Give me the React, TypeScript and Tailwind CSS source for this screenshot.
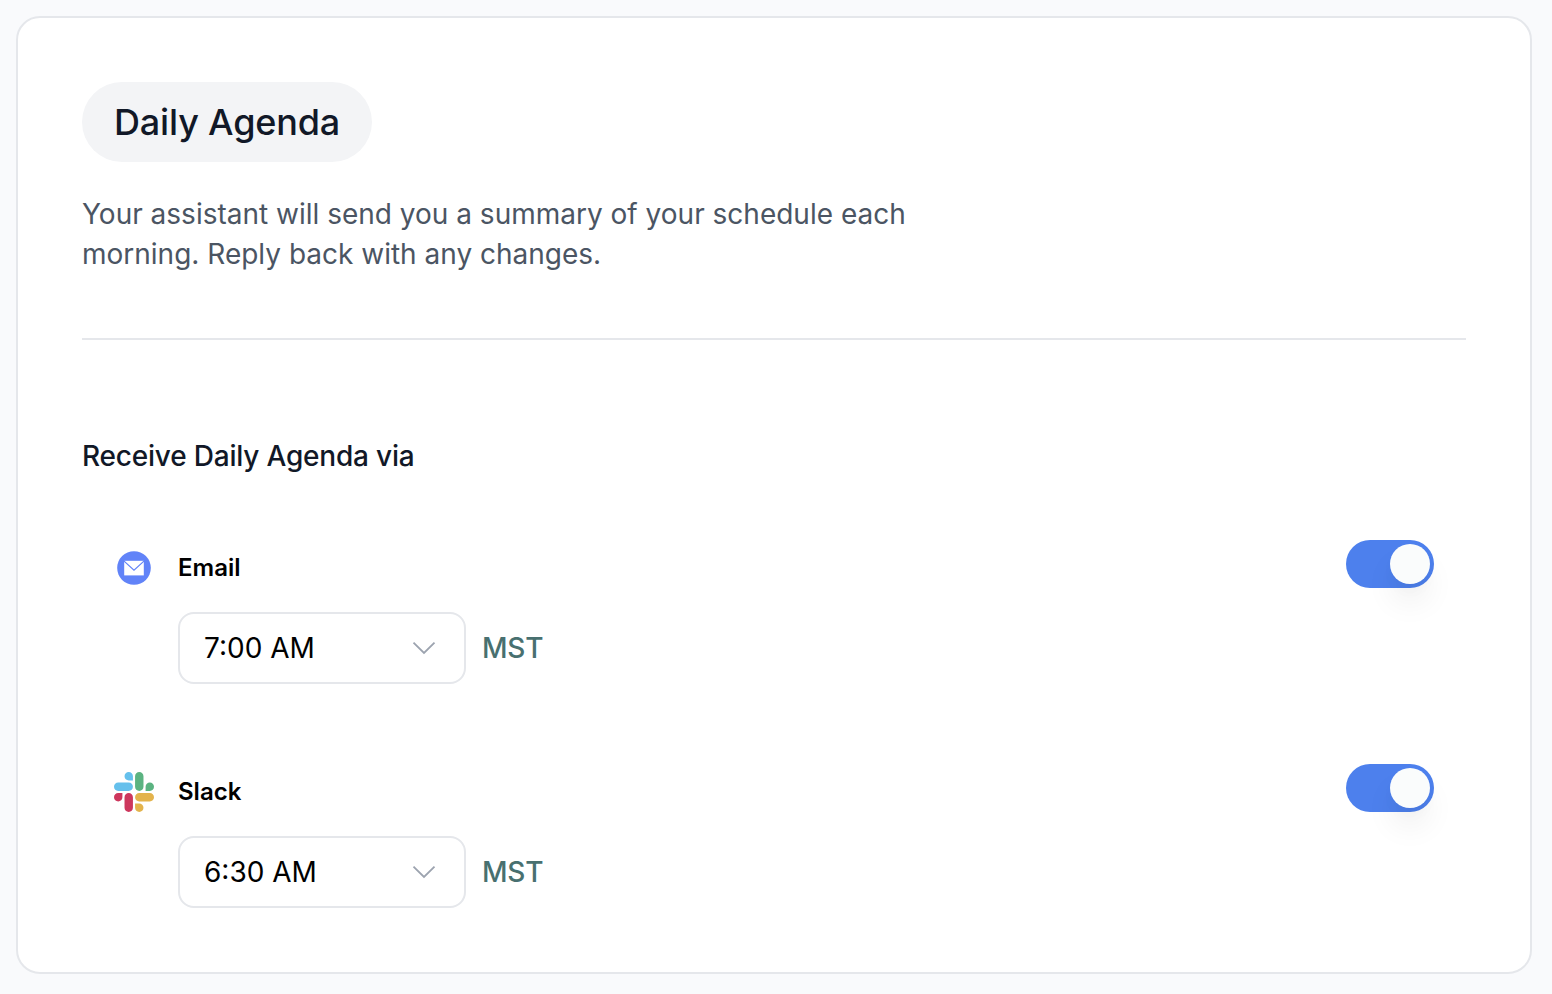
function EmailIcon() {
  return (
    <svg viewBox="0 0 40 40" className="size-10">
      <circle cx="20" cy="20" r="16.8" fill="#6183f8" />
      <path d="M10.2 12.8h19.6v14.6H10.2z" fill="#fff" />
      <path d="M9.8 12.9l10.2 9.2 10.2-9.2" fill="none" stroke="#6183f8" strokeWidth="1.2" />
    </svg>
  );
}

function SlackIcon() {
  return (
    <svg viewBox="0 0 122.8 122.8" className="size-10">
      <path d="M25.8 77.6c0 7.1-5.8 12.9-12.9 12.9S0 84.7 0 77.6s5.8-12.9 12.9-12.9h12.9v12.9zm6.5 0c0-7.1 5.8-12.9 12.9-12.9s12.9 5.8 12.9 12.9v32.3c0 7.1-5.8 12.9-12.9 12.9s-12.9-5.8-12.9-12.9V77.6z" fill="#cd375d" />
      <path d="M45.2 25.8c-7.1 0-12.9-5.8-12.9-12.9S38.1 0 45.2 0s12.9 5.8 12.9 12.9v12.9H45.2zm0 6.5c7.1 0 12.9 5.8 12.9 12.9s-5.8 12.9-12.9 12.9H12.9C5.8 58.1 0 52.3 0 45.2s5.8-12.9 12.9-12.9h32.3z" fill="#65c0ec" />
      <path d="M97 45.2c0-7.1 5.8-12.9 12.9-12.9s12.9 5.8 12.9 12.9-5.8 12.9-12.9 12.9H97V45.2zm-6.5 0c0 7.1-5.8 12.9-12.9 12.9s-12.9-5.8-12.9-12.9V12.9C64.7 5.8 70.5 0 77.6 0s12.9 5.8 12.9 12.9v32.3z" fill="#5bb381" />
      <path d="M77.6 97c7.1 0 12.9 5.8 12.9 12.9s-5.8 12.9-12.9 12.9-12.9-5.8-12.9-12.9V97h12.9zm0-6.5c-7.1 0-12.9-5.8-12.9-12.9s5.8-12.9 12.9-12.9h32.3c7.1 0 12.9 5.8 12.9 12.9s-5.8 12.9-12.9 12.9H77.6z" fill="#e3b34c" />
    </svg>
  );
}

function Channel({ icon, name, time }: { icon: React.ReactNode; name: string; time: string }) {
  return (
    <div className="flex items-start justify-between px-8">
      <div className="flex gap-6 pt-2">
        {icon}
        <div>
          <p className="text-2xl leading-10 font-semibold text-black">{name}</p>
          <div className="mt-6 flex items-center gap-4">
            <button className="flex h-18 w-72 items-center justify-between rounded-2xl border-2 border-gray-200 bg-white pr-7 pl-6 text-[28px] leading-10 text-black">
              {time}
              <svg viewBox="0 0 24 24" className="size-6" fill="none" stroke="#9ca3af" strokeWidth="1.8">
                <path d="M1.5 6.6L12 17l10.5-10.4" />
              </svg>
            </button>
            <span className="text-[28px] leading-10 font-medium tracking-[-0.2px] text-[#487070]">MST</span>
          </div>
        </div>
      </div>
      <button role="switch" aria-checked="true" aria-label={name} className="flex h-12 w-22 items-center justify-end rounded-full bg-[#4d80ed] p-1">
        <span className="size-10 rounded-full bg-[#fafcfc] shadow-[0_20px_30px_0px_rgba(0,0,0,0.06),0_8px_16px_-4px_rgba(0,0,0,0.04)]"></span>
      </button>
    </div>
  );
}

export default function App() {
  return (
    <main className="min-h-screen bg-[#f9fafc] pt-4 pr-5 pb-5 pl-4 font-['Inter',sans-serif]">
      <div className="h-[958px] rounded-3xl border-2 border-gray-200 bg-white p-16">
        <div className="flex">
          <h1 className="flex h-20 items-center rounded-full bg-[#f3f4f6] px-8 text-4xl font-medium tracking-[-0.17px] text-[#111827]">Daily Agenda</h1>
        </div>
        <p className="mt-8 max-w-4xl text-[28px] leading-10 text-[#4b5563]">
          Your assistant will send you a summary of your schedule each morning. Reply back with any changes.
        </p>
        <hr className="mt-16 border-t-2 border-gray-200" />

        <h2 className="mt-24 text-[28px] leading-10 font-medium tracking-[-0.2px] text-[#111827]">Receive Daily Agenda via</h2>
        <div className="mt-16 flex flex-col gap-20">
          <Channel icon={<EmailIcon />} name="Email" time="7:00 AM" />
          <Channel icon={<SlackIcon />} name="Slack" time="6:30 AM" />
        </div>
      </div>
    </main>
  );
}
